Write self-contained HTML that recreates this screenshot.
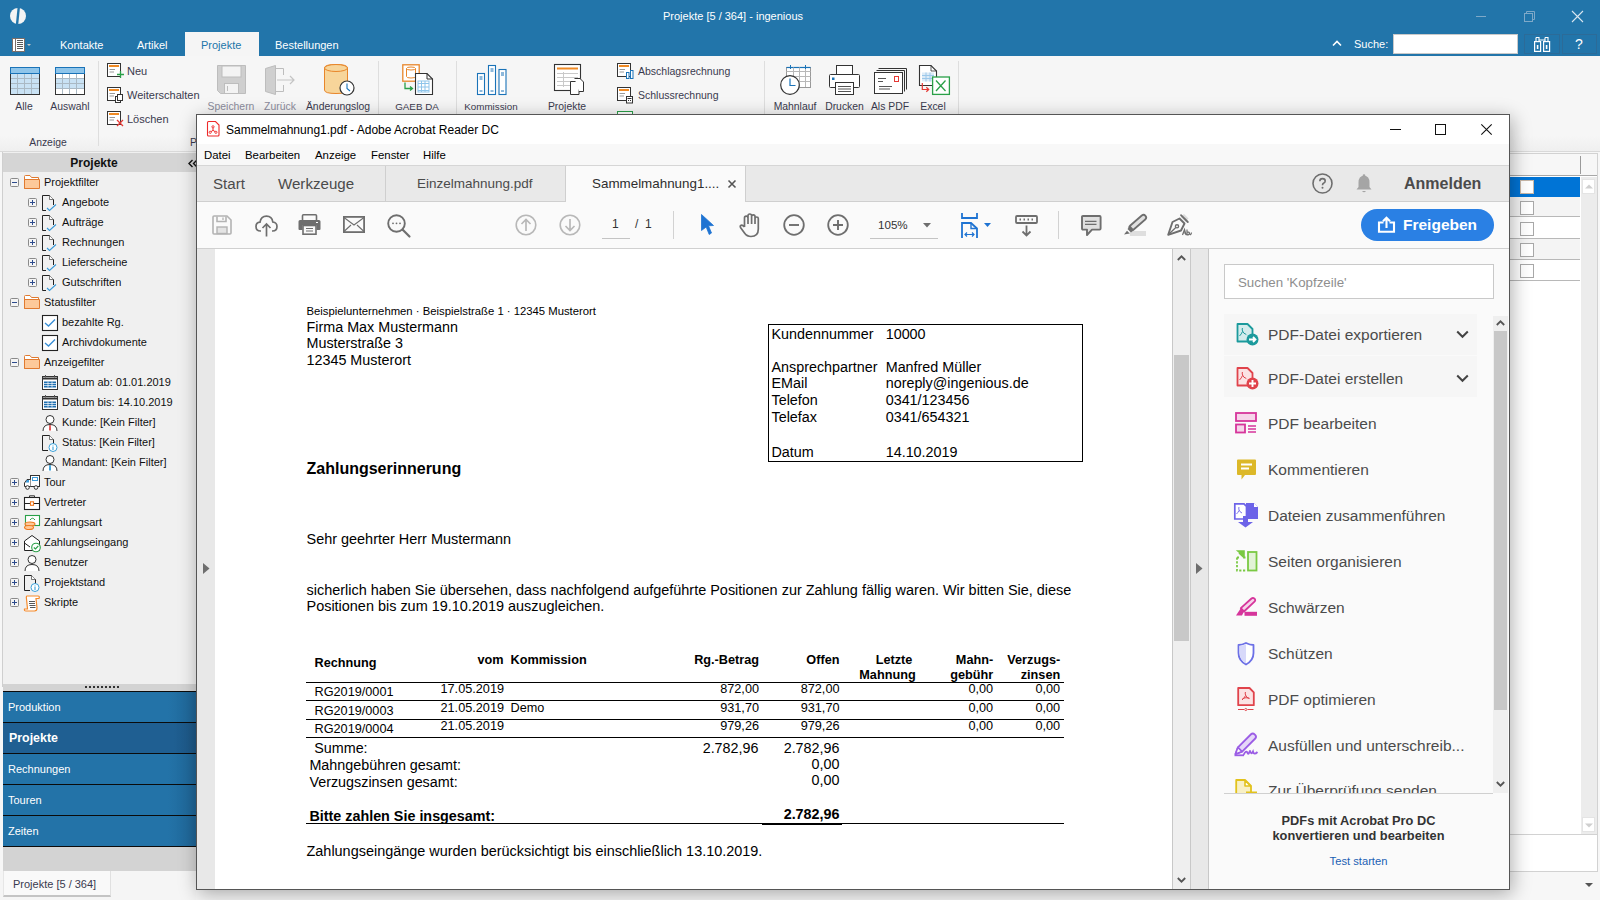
<!DOCTYPE html>
<html><head><meta charset="utf-8">
<style>
*{margin:0;padding:0;box-sizing:border-box}
html,body{width:1600px;height:900px;overflow:hidden;background:#f7f7f7;font-family:"Liberation Sans",sans-serif;font-size:11px;color:#222}
.a{position:absolute}
.t{position:absolute;white-space:nowrap;line-height:12px;height:12px}
svg{position:absolute;overflow:visible}
.rl{position:absolute;white-space:nowrap;line-height:12px;font-size:10.4px;color:#3a3a4e;text-align:center}
.nt{position:absolute;white-space:nowrap;line-height:12px;font-size:11px;color:#111}
.pd{position:absolute;white-space:nowrap;line-height:16px;font-size:14.45px;color:#000}
.tl{position:absolute;white-space:nowrap;line-height:18px;font-size:15.5px;color:#4b4b4b}
</style></head><body>
<!-- ===== BACKGROUND APP ===== -->
<div class="a" style="left:0;top:0;width:1600px;height:56px;background:#2275aa"></div>
<!-- logo -->
<svg style="left:10px;top:8px" width="16" height="16" viewBox="0 0 16 16"><circle cx="8" cy="8" r="8" fill="#f4f4f4"/><path d="M7.6 -1 L10 -1 L8.2 17 L5.8 17 Z" fill="#2275aa"/></svg>
<div class="t" style="left:663px;top:10px;color:#fff;font-size:11px">Projekte [5 / 364] - ingenious</div>
<!-- window controls -->
<div class="a" style="left:1476px;top:16px;width:10px;height:1px;background:#7fa9c8"></div>
<svg style="left:1524px;top:11px" width="11" height="11"><rect x="0.5" y="2.5" width="8" height="8" fill="none" stroke="#7fa9c8"/><path d="M2.5 2.5 V0.5 H10.5 V8.5 H8.5" fill="none" stroke="#7fa9c8"/></svg>
<svg style="left:1572px;top:11px" width="11" height="11"><path d="M0 0 L11 11 M11 0 L0 11" stroke="#d9e6f0" stroke-width="1.1"/></svg>
<!-- menu icon -->
<svg style="left:12px;top:38px" width="22" height="14"><rect x="0.5" y="0.5" width="12" height="13" fill="#fff" stroke="#7b6f6a"/><path d="M3.5 0.5 V13.5" stroke="#7b6f6a"/><path d="M5 2.5 H11 M5 4.5 H11 M5 6.5 H11 M5 8.5 H11 M5 10.5 H11" stroke="#5a5a5a"/><path d="M15 6 L19 6 L17 8 Z" fill="#c8c8c8"/></svg>
<div class="t" style="left:60px;top:39px;color:#fff;font-size:11px">Kontakte</div>
<div class="t" style="left:137px;top:39px;color:#fff;font-size:11px">Artikel</div>
<div class="a" style="left:185px;top:32px;width:74px;height:24px;background:#f5f5f5"></div>
<div class="t" style="left:201px;top:39px;color:#2275aa;font-size:11px">Projekte</div>
<div class="t" style="left:275px;top:39px;color:#fff;font-size:11px">Bestellungen</div>
<svg style="left:1332px;top:40px" width="10" height="7"><path d="M1 5.5 L5 1.5 L9 5.5" fill="none" stroke="#fff" stroke-width="1.6"/></svg>
<div class="t" style="left:1354px;top:38px;color:#fff;font-size:11px">Suche:</div>
<div class="a" style="left:1393px;top:34px;width:125px;height:20px;background:#fff;border:1px solid #c9c9c9"></div>
<div class="a" style="left:1524px;top:34px;width:36px;height:20px;border:1px solid #2c6b98"></div>
<svg style="left:1534px;top:37px" width="17" height="15"><path d="M2 0.5 H5 V4.5 M11 0.5 H14 V4.5" fill="none" stroke="#fff" stroke-width="1.1"/><path d="M2 0.5 V4.5 M11 0.5 V4.5 M5 3 H11" fill="none" stroke="#fff" stroke-width="1.1"/><rect x="0.6" y="4.6" width="6" height="9.8" fill="none" stroke="#fff" stroke-width="1.2"/><rect x="9.6" y="4.6" width="6" height="9.8" fill="none" stroke="#fff" stroke-width="1.2"/><rect x="2.8" y="8" width="1.6" height="4" fill="#fff"/><rect x="11.8" y="8" width="1.6" height="4" fill="#fff"/></svg>
<div class="a" style="left:1562px;top:34px;width:35px;height:20px;border:1px solid #2c6b98"></div>
<div class="t" style="left:1575px;top:37px;color:#fff;font-size:14px;line-height:15px;height:15px">?</div>

<!-- ribbon body -->
<div class="a" style="left:0;top:56px;width:1600px;height:95px;background:linear-gradient(#f6f6f6 0,#f6f6f6 80px,#efefef 95px)"></div>
<div class="a" style="left:0;top:151px;width:1600px;height:1px;background:#d9d9d9"></div>
<!-- separators -->
<div class="a" style="left:98px;top:61px;width:1px;height:85px;background:#dedede"></div>
<div class="a" style="left:378px;top:61px;width:1px;height:85px;background:#dedede"></div>
<div class="a" style="left:456px;top:61px;width:1px;height:85px;background:#dedede"></div>
<div class="a" style="left:764px;top:61px;width:1px;height:85px;background:#dedede"></div>
<div class="a" style="left:958px;top:61px;width:1px;height:85px;background:#dedede"></div>

<!-- Alle -->
<svg style="left:10px;top:67px" width="30" height="28" viewBox="0 0 30 28"><rect x="0.5" y="0.5" width="29" height="27" fill="#c9e2f4" stroke="#333"/><rect x="1" y="1" width="28" height="5" fill="#8fc5ea"/><path d="M0.5 6.5 H29.5" stroke="#1a73b8"/><path d="M1 11.5 H29 M1 16.5 H29 M1 21.5 H29 M7.5 6 V27 M14.5 6 V27 M21.5 6 V27" stroke="#aab9c4"/><rect x="0.5" y="0.5" width="29" height="27" fill="none" stroke="#333"/><rect x="0.5" y="0.5" width="29" height="6" fill="none" stroke="#1a73b8"/></svg>
<div class="rl" style="left:9px;top:101px;width:30px">Alle</div>
<!-- Auswahl -->
<svg style="left:55px;top:67px" width="30" height="28" viewBox="0 0 30 28"><rect x="0.5" y="0.5" width="29" height="27" fill="#fff" stroke="#333"/><rect x="1" y="11" width="28" height="11" fill="#c9e2f4"/><rect x="1" y="1" width="28" height="5" fill="#8fc5ea"/><path d="M1 11.5 H29 M1 16.5 H29 M1 21.5 H29 M7.5 6 V27 M14.5 6 V27 M21.5 6 V27" stroke="#aab9c4"/><rect x="0.5" y="0.5" width="29" height="27" fill="none" stroke="#333"/><rect x="0.5" y="0.5" width="29" height="6" fill="none" stroke="#1a73b8"/></svg>
<div class="rl" style="left:50px;top:101px;width:40px">Auswahl</div>
<div class="rl" style="left:22px;top:137px;width:52px">Anzeige</div>
<div class="rl" style="left:190px;top:137px;width:10px;text-align:left">P</div>

<!-- small buttons Neu / Weiterschalten / Löschen -->
<svg style="left:107px;top:63px" width="18" height="17"><rect x="0.5" y="0.5" width="13" height="13" fill="#fff" stroke="#333"/><rect x="2" y="2" width="10" height="2" fill="#f08a24"/><path d="M2.5 6.5 H8 M2.5 9 H7" stroke="#999"/><path d="M10 11.5 H17 M13.5 8 V15" stroke="#2aa048" stroke-width="1.3"/></svg>
<div class="t" style="left:127px;top:65px;font-size:11px;color:#3a3a4e">Neu</div>
<svg style="left:107px;top:87px" width="18" height="17"><rect x="0.5" y="0.5" width="13" height="13" fill="#fff" stroke="#333"/><rect x="2" y="2" width="10" height="2" fill="#f08a24"/><path d="M2.5 6.5 H8 M2.5 9 H7" stroke="#999"/><rect x="8.5" y="9.5" width="5" height="6" fill="#fff" stroke="#333"/><rect x="10.5" y="7.5" width="5" height="6" fill="#fff" stroke="#333"/></svg>
<div class="t" style="left:127px;top:89px;font-size:11px;color:#3a3a4e">Weiterschalten</div>
<svg style="left:107px;top:111px" width="18" height="17"><rect x="0.5" y="0.5" width="13" height="13" fill="#fff" stroke="#333"/><rect x="2" y="2" width="10" height="2" fill="#f08a24"/><path d="M2.5 6.5 H8 M2.5 9 H7" stroke="#999"/><path d="M10 9 L16 15 M16 9 L10 15" stroke="#e53935" stroke-width="1.3"/></svg>
<div class="t" style="left:127px;top:113px;font-size:11px;color:#3a3a4e">Löschen</div>

<!-- Speichern (disabled) -->
<svg style="left:217px;top:65px" width="29" height="29" viewBox="0 0 29 29"><path d="M0.5 0.5 H28.5 V28.5 H3.5 L0.5 25.5 Z" fill="#cfcfcf" stroke="#bdbdbd"/><rect x="5" y="1" width="19" height="11" fill="#f3f3f3" stroke="#bdbdbd"/><rect x="7.5" y="18.5" width="14" height="10" fill="#f3f3f3" stroke="#bdbdbd"/><path d="M10.5 21 V26" stroke="#bdbdbd"/></svg>
<div class="rl" style="left:205px;top:101px;width:52px;color:#8c8c9c">Speichern</div>
<!-- Zurück -->
<svg style="left:265px;top:65px" width="32" height="30" viewBox="0 0 32 30"><path d="M0.5 3.5 L10.5 0.5 V29.5 L0.5 26.5 Z" fill="#cfcfcf" stroke="#bdbdbd"/><path d="M10.5 3.5 H18.5 V10 M18.5 20 V26.5 H10.5" fill="none" stroke="#bdbdbd"/><path d="M12 15 H29 M25 11 L29 15 L25 19" fill="none" stroke="#c4c4c4" stroke-width="1.2"/></svg>
<div class="rl" style="left:262px;top:101px;width:36px;color:#8c8c9c">Zurück</div>
<!-- Änderungslog -->
<svg style="left:324px;top:64px" width="32" height="32" viewBox="0 0 32 32"><path d="M0.5 4 Q0.5 0.5 12 0.5 Q23.5 0.5 23.5 4 V26 Q23.5 29.5 12 29.5 Q0.5 29.5 0.5 26 Z" fill="#f7d59a" stroke="#e8862a"/><ellipse cx="12" cy="4" rx="11.5" ry="3.5" fill="#f7d59a" stroke="#e8862a"/><circle cx="23" cy="24" r="7" fill="#fff" stroke="#333" stroke-width="1.2"/><path d="M23 19.5 V24.5 L26 27" fill="none" stroke="#1a73b8" stroke-width="1.1"/></svg>
<div class="rl" style="left:303px;top:101px;width:70px">Änderungslog</div>
<!-- GAEB DA -->
<svg style="left:402px;top:64px" width="33" height="32" viewBox="0 0 33 32"><rect x="0.8" y="0.8" width="16.4" height="16.4" fill="#fff" stroke="#e8862a" stroke-width="1.3"/><path d="M4.5 4.5 Q4.5 3 9 3 Q13.5 3 13.5 4.5 V12.5 Q13.5 14 9 14 Q4.5 14 4.5 12.5 Z M4.5 4.5 Q4.5 6 9 6 Q13.5 6 13.5 4.5" fill="none" stroke="#e8862a"/><path d="M13.5 9.5 H25 L30.5 15 V30.5 H13.5 Z" fill="#fff" stroke="#333" stroke-width="1.1"/><path d="M25 9.5 V15 H30.5" fill="none" stroke="#333"/><path d="M16 19.5 H27 M16 23 H27 M16 26.5 H27 M19.5 17 V28 M23 17 V28" stroke="#8fc5ea"/><rect x="16" y="17" width="11" height="11" fill="none" stroke="#8fc5ea"/><path d="M3 18.5 V24.5 H10 M8 22.5 L10.5 24.5 L8 26.5" fill="none" stroke="#2aa048" stroke-width="1.3"/></svg>
<div class="rl" style="left:393px;top:101px;width:48px;font-size:9.8px">GAEB DA</div>
<!-- Kommission -->
<svg style="left:477px;top:65px" width="30" height="30" viewBox="0 0 30 30"><rect x="0.5" y="8.5" width="7" height="21" fill="#fff" stroke="#1a73b8" stroke-width="1.1"/><rect x="11.5" y="0.5" width="7" height="29" fill="#fff" stroke="#1a73b8" stroke-width="1.1"/><rect x="22" y="4.5" width="7" height="25" fill="#fff" stroke="#1a73b8" stroke-width="1.1"/><path d="M2.5 12 H5.5 M2.5 14 H5.5 M2.5 26 H5.5 M13.5 4 H16.5 M13.5 6 H16.5 M13.5 26 H16.5 M24 8 H27 M24 10 H27 M24 26 H27" stroke="#1a73b8"/></svg>
<div class="rl" style="left:462px;top:101px;width:58px;font-size:9.8px">Kommission</div>
<!-- Projekte -->
<svg style="left:554px;top:64px" width="31" height="32" viewBox="0 0 31 32"><rect x="0.5" y="0.5" width="26" height="26" fill="#fff" stroke="#333" stroke-width="1.1"/><rect x="3" y="3.5" width="21" height="2" fill="#f08a24"/><path d="M3 9.5 H24 M3 13.5 H24 M3 17.5 H24 M3 21.5 H17 M9.5 8 V23" stroke="#c9c9c9"/><path d="M16.5 17.5 H22 L25 20.5 V30.5 H16.5 Z" fill="#fff" stroke="#333"/><path d="M20.5 14.5 H26 L29.5 18 V27.5 H25" fill="#fff" stroke="#333"/></svg>
<div class="rl" style="left:545px;top:101px;width:44px">Projekte</div>
<!-- Abschlagsrechnung / Schlussrechnung -->
<svg style="left:617px;top:63px" width="18" height="17"><rect x="0.5" y="0.5" width="13" height="13" fill="#fff" stroke="#333"/><rect x="2" y="2" width="10" height="2" fill="#f08a24"/><path d="M2.5 6.5 H8 M2.5 9 H7" stroke="#999"/><rect x="9.5" y="9.5" width="2.5" height="6" fill="#fff" stroke="#1a73b8"/><rect x="13.5" y="7.5" width="2.5" height="8" fill="#fff" stroke="#1a73b8"/></svg>
<div class="t" style="left:638px;top:65px;font-size:10.5px;color:#3a3a4e">Abschlagsrechnung</div>
<svg style="left:617px;top:87px" width="18" height="17"><rect x="0.5" y="0.5" width="13" height="13" fill="#fff" stroke="#333"/><rect x="2" y="2" width="10" height="2" fill="#f08a24"/><path d="M2.5 6.5 H8 M2.5 9 H7" stroke="#999"/><rect x="9.5" y="9.5" width="6" height="6.5" fill="#fff" stroke="#333"/><path d="M10.5 11.5 H14.5 M11 13.5 h1 M13 13.5 h1" stroke="#333"/></svg>
<div class="t" style="left:638px;top:89px;font-size:10.5px;color:#3a3a4e">Schlussrechnung</div>
<svg style="left:617px;top:111px" width="18" height="5"><rect x="0.5" y="0.5" width="15" height="6" fill="#fff" stroke="#2aa048"/></svg>
<!-- Mahnlauf -->
<svg style="left:780px;top:65px" width="31" height="30" viewBox="0 0 31 30"><rect x="6.5" y="2.5" width="24" height="20" fill="#fff" stroke="#999"/><path d="M6.5 2.5 H30.5" stroke="#1a73b8" stroke-width="1.2"/><path d="M6.5 6.5 H30.5 M6.5 11.5 H30.5 M6.5 16.5 H30.5 M13.5 2.5 V22 M19.5 2.5 V22 M25.5 2.5 V22" stroke="#b8b8b8"/><path d="M10.5 0 V4 M25.5 0 V4" stroke="#1a73b8"/><circle cx="10" cy="20" r="9.3" fill="#fff" stroke="#333" stroke-width="1.2"/><path d="M10 13.5 V20.5 H15.5" fill="none" stroke="#1a73b8" stroke-width="1.2"/></svg>
<div class="rl" style="left:770px;top:101px;width:50px">Mahnlauf</div>
<!-- Drucken -->
<svg style="left:829px;top:65px" width="31" height="30" viewBox="0 0 31 30"><rect x="7.5" y="0.5" width="16" height="9" fill="#fff" stroke="#333"/><rect x="0.5" y="9.5" width="30" height="13" rx="1" fill="#fff" stroke="#333"/><rect x="3" y="12.5" width="2.5" height="2.5" fill="#1a73b8"/><rect x="6.5" y="17.5" width="18" height="12" fill="#fff" stroke="#333"/><path d="M9 21.5 H22 M9 24 H22 M9 26.5 H22" stroke="#555"/></svg>
<div class="rl" style="left:822px;top:101px;width:45px">Drucken</div>
<!-- Als PDF -->
<svg style="left:874px;top:68px" width="33" height="26" viewBox="0 0 33 26"><path d="M4.5 0.5 H32.5 V21.5 M2.5 2.5 H30.5 V23.5" fill="none" stroke="#333"/><rect x="0.5" y="4.5" width="28" height="21" fill="#fff" stroke="#333"/><rect x="20.5" y="8.5" width="4" height="5" fill="#fff" stroke="#e53935"/><path d="M4 10.5 H12 M4 13.5 H9 M5 18.5 H18 M5 21 H16" stroke="#555"/></svg>
<div class="rl" style="left:868px;top:101px;width:44px">Als PDF</div>
<!-- Excel -->
<svg style="left:919px;top:65px" width="31" height="30" viewBox="0 0 31 30"><path d="M0.5 0.5 H12 L17.5 6 V20.5 H0.5 Z" fill="#fff" stroke="#333" stroke-width="1.1"/><path d="M12 0.5 V6 H17.5" fill="none" stroke="#333" stroke-width="0.8"/><rect x="3" y="7.5" width="12" height="9" fill="#dcebf7"/><path d="M3 10.5 H15 M3 13.5 H15 M7 7.5 V16.5 M11 7.5 V16.5" stroke="#9cc8ea" stroke-width="1"/><path d="M3.3 18 V24.5 H9.5 M7.3 22.3 L9.7 24.5 L7.3 26.7" fill="none" stroke="#e53935" stroke-width="1.2"/><rect x="13.6" y="12" width="16.8" height="17.4" fill="#fff" stroke="#2aa048" stroke-width="1.3"/><path d="M17 15.5 L26.5 26 M26.5 15.5 L17 26" stroke="#2aa048" stroke-width="1.3"/></svg>
<div class="rl" style="left:914px;top:101px;width:38px">Excel</div>

<!-- left nav panel -->
<div class="a" style="left:2px;top:152px;width:195px;height:535px;background:#f0f0f0;border-left:1px solid #cfcfcf"></div>
<div class="a" style="left:3px;top:153px;width:194px;height:19px;background:#d5d5d5"></div>
<div class="t" style="left:58px;top:157px;font-size:12px;line-height:13px;height:13px;font-weight:bold;color:#111;width:72px;text-align:center">Projekte</div>
<svg style="left:188px;top:159px" width="10" height="9"><path d="M4.5 1 L1 4.5 L4.5 8 M9 1 L5.5 4.5 L9 8" fill="none" stroke="#111" stroke-width="1.4"/></svg>
<svg style="left:10px;top:178px" width="9" height="9"><rect x="0.5" y="0.5" width="8" height="8" rx="1" fill="#f4f4f4" stroke="#8a8a8a"/><path d="M2 4.5 H7" stroke="#2c4a8c" stroke-width="1"/></svg>
<svg style="left:24px;top:175px" width="16" height="16"><path d="M0.5 1.5 Q0.5 0.5 1.5 0.5 H6 L7.5 2.5 H14.5 V13.5 H0.5 Z" fill="#fff" stroke="#e07a30"/><path d="M0.5 4.5 H15.5 V13.5 H0.5 Z" fill="#fdc99a" stroke="#e07a30"/></svg>
<div class="nt" style="left:44px;top:176px">Projektfilter</div>
<svg style="left:28px;top:198px" width="9" height="9"><rect x="0.5" y="0.5" width="8" height="8" rx="1" fill="#f4f4f4" stroke="#8a8a8a"/><path d="M2 4.5 H7 M4.5 2 V7" stroke="#2c4a8c" stroke-width="1"/></svg>
<svg style="left:42px;top:195px" width="16" height="16"><path d="M0.5 15.5 V0.5 H7.5 L11.5 4.5 V10 M0.5 15.5 H4" fill="none" stroke="#222"/><path d="M7.5 0.5 V4.5 H11.5" fill="#fff" stroke="#222" stroke-width="0.6"/><path d="M5 13 L7.5 15.5 L14 9.5" fill="none" stroke="#3a9ad9" stroke-width="1.1"/></svg>
<div class="nt" style="left:62px;top:196px">Angebote</div>
<svg style="left:28px;top:218px" width="9" height="9"><rect x="0.5" y="0.5" width="8" height="8" rx="1" fill="#f4f4f4" stroke="#8a8a8a"/><path d="M2 4.5 H7 M4.5 2 V7" stroke="#2c4a8c" stroke-width="1"/></svg>
<svg style="left:42px;top:215px" width="16" height="16"><path d="M0.5 15.5 V0.5 H7.5 L11.5 4.5 V10 M0.5 15.5 H4" fill="none" stroke="#222"/><path d="M7.5 0.5 V4.5 H11.5" fill="#fff" stroke="#222" stroke-width="0.6"/><path d="M5 13 L7.5 15.5 L14 9.5" fill="none" stroke="#3a9ad9" stroke-width="1.1"/></svg>
<div class="nt" style="left:62px;top:216px">Aufträge</div>
<svg style="left:28px;top:238px" width="9" height="9"><rect x="0.5" y="0.5" width="8" height="8" rx="1" fill="#f4f4f4" stroke="#8a8a8a"/><path d="M2 4.5 H7 M4.5 2 V7" stroke="#2c4a8c" stroke-width="1"/></svg>
<svg style="left:42px;top:235px" width="16" height="16"><path d="M0.5 15.5 V0.5 H7.5 L11.5 4.5 V10 M0.5 15.5 H4" fill="none" stroke="#222"/><path d="M7.5 0.5 V4.5 H11.5" fill="#fff" stroke="#222" stroke-width="0.6"/><path d="M5 13 L7.5 15.5 L14 9.5" fill="none" stroke="#3a9ad9" stroke-width="1.1"/></svg>
<div class="nt" style="left:62px;top:236px">Rechnungen</div>
<svg style="left:28px;top:258px" width="9" height="9"><rect x="0.5" y="0.5" width="8" height="8" rx="1" fill="#f4f4f4" stroke="#8a8a8a"/><path d="M2 4.5 H7 M4.5 2 V7" stroke="#2c4a8c" stroke-width="1"/></svg>
<svg style="left:42px;top:255px" width="16" height="16"><path d="M0.5 15.5 V0.5 H7.5 L11.5 4.5 V10 M0.5 15.5 H4" fill="none" stroke="#222"/><path d="M7.5 0.5 V4.5 H11.5" fill="#fff" stroke="#222" stroke-width="0.6"/><path d="M5 13 L7.5 15.5 L14 9.5" fill="none" stroke="#3a9ad9" stroke-width="1.1"/></svg>
<div class="nt" style="left:62px;top:256px">Lieferscheine</div>
<svg style="left:28px;top:278px" width="9" height="9"><rect x="0.5" y="0.5" width="8" height="8" rx="1" fill="#f4f4f4" stroke="#8a8a8a"/><path d="M2 4.5 H7 M4.5 2 V7" stroke="#2c4a8c" stroke-width="1"/></svg>
<svg style="left:42px;top:275px" width="16" height="16"><path d="M0.5 15.5 V0.5 H7.5 L11.5 4.5 V10 M0.5 15.5 H4" fill="none" stroke="#222"/><path d="M7.5 0.5 V4.5 H11.5" fill="#fff" stroke="#222" stroke-width="0.6"/><path d="M5 13 L7.5 15.5 L14 9.5" fill="none" stroke="#3a9ad9" stroke-width="1.1"/></svg>
<div class="nt" style="left:62px;top:276px">Gutschriften</div>
<svg style="left:10px;top:298px" width="9" height="9"><rect x="0.5" y="0.5" width="8" height="8" rx="1" fill="#f4f4f4" stroke="#8a8a8a"/><path d="M2 4.5 H7" stroke="#2c4a8c" stroke-width="1"/></svg>
<svg style="left:24px;top:295px" width="16" height="16"><path d="M0.5 1.5 Q0.5 0.5 1.5 0.5 H6 L7.5 2.5 H14.5 V13.5 H0.5 Z" fill="#fff" stroke="#e07a30"/><path d="M0.5 4.5 H15.5 V13.5 H0.5 Z" fill="#fdc99a" stroke="#e07a30"/></svg>
<div class="nt" style="left:44px;top:296px">Statusfilter</div>
<svg style="left:42px;top:315px" width="16" height="16"><rect x="0.5" y="0.5" width="15" height="15" fill="#fff" stroke="#222" stroke-width="1.1"/><path d="M3 8 L6.5 11 L13 4.5" fill="none" stroke="#3a8fd6" stroke-width="1.4"/></svg>
<div class="nt" style="left:62px;top:316px">bezahlte Rg.</div>
<svg style="left:42px;top:335px" width="16" height="16"><rect x="0.5" y="0.5" width="15" height="15" fill="#fff" stroke="#222" stroke-width="1.1"/><path d="M3 8 L6.5 11 L13 4.5" fill="none" stroke="#3a8fd6" stroke-width="1.4"/></svg>
<div class="nt" style="left:62px;top:336px">Archivdokumente</div>
<svg style="left:10px;top:358px" width="9" height="9"><rect x="0.5" y="0.5" width="8" height="8" rx="1" fill="#f4f4f4" stroke="#8a8a8a"/><path d="M2 4.5 H7" stroke="#2c4a8c" stroke-width="1"/></svg>
<svg style="left:24px;top:355px" width="16" height="16"><path d="M0.5 1.5 Q0.5 0.5 1.5 0.5 H6 L7.5 2.5 H14.5 V13.5 H0.5 Z" fill="#fff" stroke="#e07a30"/><path d="M0.5 4.5 H15.5 V13.5 H0.5 Z" fill="#fdc99a" stroke="#e07a30"/></svg>
<div class="nt" style="left:44px;top:356px">Anzeigefilter</div>
<svg style="left:42px;top:375px" width="16" height="16"><rect x="0.5" y="1.5" width="15" height="13" fill="#fff" stroke="#333"/><path d="M0.5 3.5 H15.5" stroke="#333" stroke-width="2"/><path d="M3.5 0 V2.5 M12.5 0 V2.5" stroke="#555"/><rect x="2" y="6.5" width="12" height="6" fill="#1e6fb0"/><path d="M2 8.5 H14 M2 10.5 H14 M6 6.5 V12.5 M10 6.5 V12.5" stroke="#fff" stroke-width="0.7"/></svg>
<div class="nt" style="left:62px;top:376px">Datum ab: 01.01.2019</div>
<svg style="left:42px;top:395px" width="16" height="16"><rect x="0.5" y="1.5" width="15" height="13" fill="#fff" stroke="#333"/><path d="M0.5 3.5 H15.5" stroke="#333" stroke-width="2"/><path d="M3.5 0 V2.5 M12.5 0 V2.5" stroke="#555"/><rect x="2" y="6.5" width="12" height="6" fill="#1e6fb0"/><path d="M2 8.5 H14 M2 10.5 H14 M6 6.5 V12.5 M10 6.5 V12.5" stroke="#fff" stroke-width="0.7"/></svg>
<div class="nt" style="left:62px;top:396px">Datum bis: 14.10.2019</div>
<svg style="left:42px;top:415px" width="16" height="16"><circle cx="8" cy="4.5" r="4" fill="#fff" stroke="#333"/><path d="M1 16 Q1 9.5 8 9.5 Q15 9.5 15 16" fill="#fff" stroke="#333"/><path d="M7.2 10 H8.8 L9 15 L8 16 L7 15 Z" fill="#e05050"/></svg>
<div class="nt" style="left:62px;top:416px">Kunde: [Kein Filter]</div>
<svg style="left:42px;top:435px" width="16" height="16"><path d="M0.5 15.5 V0.5 H7.5 L11.5 4.5 V9 M0.5 15.5 H6" fill="none" stroke="#222"/><path d="M7.5 0.5 V4.5 H11.5" fill="#fff" stroke="#222" stroke-width="0.6"/><circle cx="11" cy="12.5" r="4" fill="#fff" stroke="#3aa0d8"/><path d="M11 11.5 V15 M11 10 V10.6" stroke="#3aa0d8" stroke-width="1.1"/></svg>
<div class="nt" style="left:62px;top:436px">Status: [Kein Filter]</div>
<svg style="left:42px;top:455px" width="16" height="16"><circle cx="8" cy="4.5" r="4" fill="#fff" stroke="#333"/><path d="M1 16 Q1 9.5 8 9.5 Q15 9.5 15 16" fill="#fff" stroke="#333"/><path d="M7.2 10 H8.8 L9 15 L8 16 L7 15 Z" fill="#3aa0d8"/></svg>
<div class="nt" style="left:62px;top:456px">Mandant: [Kein Filter]</div>
<svg style="left:10px;top:478px" width="9" height="9"><rect x="0.5" y="0.5" width="8" height="8" rx="1" fill="#f4f4f4" stroke="#8a8a8a"/><path d="M2 4.5 H7 M4.5 2 V7" stroke="#2c4a8c" stroke-width="1"/></svg>
<svg style="left:24px;top:475px" width="16" height="16"><rect x="6.5" y="0.5" width="9" height="11" fill="#fff" stroke="#333"/><rect x="8.5" y="2.5" width="5" height="3" fill="#fff" stroke="#3a9ad9"/><path d="M6.5 4.5 H3 L0.5 8 V11.5 H6.5" fill="#fff" stroke="#333"/><path d="M1.5 7.5 L3 5 H5 V7.5Z" fill="#3a9ad9"/><circle cx="3.5" cy="12.5" r="1.8" fill="#fff" stroke="#333"/><circle cx="12" cy="12.5" r="1.8" fill="#fff" stroke="#333"/></svg>
<div class="nt" style="left:44px;top:476px">Tour</div>
<svg style="left:10px;top:498px" width="9" height="9"><rect x="0.5" y="0.5" width="8" height="8" rx="1" fill="#f4f4f4" stroke="#8a8a8a"/><path d="M2 4.5 H7 M4.5 2 V7" stroke="#2c4a8c" stroke-width="1"/></svg>
<svg style="left:24px;top:495px" width="16" height="16"><rect x="0.5" y="2.5" width="15" height="12" fill="#fff" stroke="#222" stroke-width="1.1"/><path d="M5.5 2.5 V0.8 H10.5 V2.5" fill="none" stroke="#333"/><path d="M0.5 8.5 H15.5" stroke="#222"/><rect x="6.5" y="6.8" width="3" height="3.5" fill="#fff" stroke="#f07a20" stroke-width="1.1"/></svg>
<div class="nt" style="left:44px;top:496px">Vertreter</div>
<svg style="left:10px;top:518px" width="9" height="9"><rect x="0.5" y="0.5" width="8" height="8" rx="1" fill="#f4f4f4" stroke="#8a8a8a"/><path d="M2 4.5 H7 M4.5 2 V7" stroke="#2c4a8c" stroke-width="1"/></svg>
<svg style="left:24px;top:515px" width="16" height="16"><rect x="1.5" y="0.5" width="14" height="10" fill="#fff" stroke="#2aa048" stroke-width="1.1"/><path d="M6 5 Q8.5 1.5 11 5" fill="none" stroke="#2aa048"/><ellipse cx="6" cy="9" rx="5" ry="2" fill="#fdc99a" stroke="#f07a20" stroke-width="1.1"/><ellipse cx="5" cy="12.5" rx="4.5" ry="2" fill="#fdc99a" stroke="#f07a20" stroke-width="1.1"/></svg>
<div class="nt" style="left:44px;top:516px">Zahlungsart</div>
<svg style="left:10px;top:538px" width="9" height="9"><rect x="0.5" y="0.5" width="8" height="8" rx="1" fill="#f4f4f4" stroke="#8a8a8a"/><path d="M2 4.5 H7 M4.5 2 V7" stroke="#2c4a8c" stroke-width="1"/></svg>
<svg style="left:24px;top:535px" width="16" height="16"><path d="M0.5 6 L8 0.5 L15.5 6 V15.5 H0.5 Z" fill="#fff" stroke="#222"/><path d="M0.5 8 L6 12" stroke="#222"/><circle cx="12" cy="12.5" r="4.3" fill="#fff" stroke="#2aa048" stroke-width="1.1"/><path d="M9.8 12.5 L11.5 14 L14.3 10.8" fill="none" stroke="#2aa048" stroke-width="1.2"/></svg>
<div class="nt" style="left:44px;top:536px">Zahlungseingang</div>
<svg style="left:10px;top:558px" width="9" height="9"><rect x="0.5" y="0.5" width="8" height="8" rx="1" fill="#f4f4f4" stroke="#8a8a8a"/><path d="M2 4.5 H7 M4.5 2 V7" stroke="#2c4a8c" stroke-width="1"/></svg>
<svg style="left:24px;top:555px" width="16" height="16"><circle cx="8" cy="4.5" r="4" fill="#fff" stroke="#333"/><path d="M1 16 Q1 9.5 8 9.5 Q15 9.5 15 16" fill="#fff" stroke="#333"/></svg>
<div class="nt" style="left:44px;top:556px">Benutzer</div>
<svg style="left:10px;top:578px" width="9" height="9"><rect x="0.5" y="0.5" width="8" height="8" rx="1" fill="#f4f4f4" stroke="#8a8a8a"/><path d="M2 4.5 H7 M4.5 2 V7" stroke="#2c4a8c" stroke-width="1"/></svg>
<svg style="left:24px;top:575px" width="16" height="16"><path d="M0.5 15.5 V0.5 H7.5 L11.5 4.5 V9 M0.5 15.5 H6" fill="none" stroke="#222"/><path d="M7.5 0.5 V4.5 H11.5" fill="#fff" stroke="#222" stroke-width="0.6"/><circle cx="11" cy="12.5" r="4" fill="#fff" stroke="#3aa0d8"/><path d="M11 11.5 V15 M11 10 V10.6" stroke="#3aa0d8" stroke-width="1.1"/></svg>
<div class="nt" style="left:44px;top:576px">Projektstand</div>
<svg style="left:10px;top:598px" width="9" height="9"><rect x="0.5" y="0.5" width="8" height="8" rx="1" fill="#f4f4f4" stroke="#8a8a8a"/><path d="M2 4.5 H7 M4.5 2 V7" stroke="#2c4a8c" stroke-width="1"/></svg>
<svg style="left:24px;top:595px" width="16" height="16"><path d="M3 1 H14 Q16 1 15 3.5 H12 L13 13 Q13 16 10.5 16 H2 Q0 16 0.5 14 H3.5 L2.5 4 Q2 1 3 1Z" fill="#fff" stroke="#f58a2a" stroke-width="1.2"/><path d="M5 6.5 H11 M5 8.5 H11 M5.5 10.5 H11.5 M6 12.5 H11.5" stroke="#444" stroke-width="0.9"/></svg>
<div class="nt" style="left:44px;top:596px">Skripte</div>
<div class="a" style="left:3px;top:684px;width:194px;height:7px;background:#d3d3d3"></div>
<svg style="left:85px;top:686px" width="36" height="3"><rect x="0" y="0" width="2" height="2" fill="#333"/><rect x="4" y="0" width="2" height="2" fill="#333"/><rect x="8" y="0" width="2" height="2" fill="#333"/><rect x="12" y="0" width="2" height="2" fill="#333"/><rect x="16" y="0" width="2" height="2" fill="#333"/><rect x="20" y="0" width="2" height="2" fill="#333"/><rect x="24" y="0" width="2" height="2" fill="#333"/><rect x="28" y="0" width="2" height="2" fill="#333"/><rect x="32" y="0" width="2" height="2" fill="#333"/></svg>
<div class="a" style="left:3px;top:691px;width:194px;height:32px;background:linear-gradient(90deg,#2373a8 0,#2373a8 165px,#1f6596 194px);border-top:1px solid #0b0b0b"></div>
<div class="t" style="left:8px;top:701px;color:#fff;font-size:11px">Produktion</div>
<div class="a" style="left:3px;top:722px;width:194px;height:32px;background:linear-gradient(90deg,#1f5f92 0,#1f5f92 170px,#1d5785 194px);border-top:1px solid #0b0b0b"></div>
<div class="t" style="left:9px;top:732px;color:#fff;font-weight:bold;font-size:12.4px">Projekte</div>
<div class="a" style="left:3px;top:753px;width:194px;height:32px;background:linear-gradient(90deg,#2373a8 0,#2373a8 165px,#1f6596 194px);border-top:1px solid #0b0b0b"></div>
<div class="t" style="left:8px;top:763px;color:#fff;font-size:11px">Rechnungen</div>
<div class="a" style="left:3px;top:784px;width:194px;height:32px;background:linear-gradient(90deg,#2373a8 0,#2373a8 165px,#1f6596 194px);border-top:1px solid #0b0b0b"></div>
<div class="t" style="left:8px;top:794px;color:#fff;font-size:11px">Touren</div>
<div class="a" style="left:3px;top:815px;width:194px;height:32px;background:linear-gradient(90deg,#2373a8 0,#2373a8 165px,#1f6596 194px);border-top:1px solid #0b0b0b"></div>
<div class="t" style="left:8px;top:825px;color:#fff;font-size:11px">Zeiten</div>
<div class="a" style="left:3px;top:846px;width:194px;height:1px;background:#0b0b0b"></div>
<div class="a" style="left:3px;top:847px;width:194px;height:24px;background:#d3d3d3"></div>
<div class="a" style="left:0;top:871px;width:196px;height:29px;background:#f5f5f5"></div>
<div class="a" style="left:3px;top:871px;width:108px;height:26px;background:#f9f9f9;border-left:1px solid #e6e6e6;border-right:1px solid #e0e0e0;border-bottom:2px solid #c4c4c4"></div>
<div class="t" style="left:13px;top:878px;font-size:11px;color:#3a3a4e">Projekte [5 / 364]</div>
<!-- right grid -->
<div class="a" style="left:1500px;top:153px;width:98px;height:682px;background:#fff;border:1px solid #d2d2d2"></div>
<div class="a" style="left:1501px;top:154px;width:96px;height:22px;background:#f7f7f7;border-bottom:1px solid #a8a8a8"></div>
<div class="a" style="left:1580px;top:156px;width:1px;height:18px;background:#9a9a9a"></div>
<div class="a" style="left:1501px;top:177px;width:79px;height:20px;background:#0074d6"></div>
<div class="a" style="left:1501px;top:197px;width:79px;height:20px;background:#f4f4f4;border-bottom:1px solid #b8b8b8"></div>
<div class="a" style="left:1501px;top:218px;width:79px;height:21px;background:#fff;border-bottom:1px solid #b8b8b8"></div>
<div class="a" style="left:1501px;top:239px;width:79px;height:21px;background:#f4f4f4;border-bottom:1px solid #b8b8b8"></div>
<div class="a" style="left:1501px;top:260px;width:79px;height:21px;background:#fff;border-bottom:1px solid #b8b8b8"></div>
<div class="a" style="left:1520px;top:180px;width:14px;height:14px;background:#fff;border:1px solid #c8b8a8"></div>
<div class="a" style="left:1520px;top:201px;width:14px;height:14px;background:#fff;border:1px solid #a8a8a8"></div>
<div class="a" style="left:1520px;top:222px;width:14px;height:14px;background:#fff;border:1px solid #a8a8a8"></div>
<div class="a" style="left:1520px;top:243px;width:14px;height:14px;background:#fff;border:1px solid #a8a8a8"></div>
<div class="a" style="left:1520px;top:264px;width:14px;height:14px;background:#fff;border:1px solid #a8a8a8"></div>
<div class="a" style="left:1581px;top:177px;width:16px;height:657px;background:#ececec"></div>
<div class="a" style="left:1582px;top:179px;width:13px;height:15px;background:#fff;border:1px solid #e4e4e4"></div>
<svg style="left:1585px;top:184px" width="8" height="5"><path d="M0 4.5 L4 0.5 L8 4.5Z" fill="#cfcfcf"/></svg>
<div class="a" style="left:1582px;top:817px;width:13px;height:15px;background:#fff;border:1px solid #e4e4e4"></div>
<svg style="left:1585px;top:823px" width="8" height="5"><path d="M0 0.5 L4 4.5 L8 0.5Z" fill="#cfcfcf"/></svg>
<div class="a" style="left:1500px;top:834px;width:98px;height:38px;background:#fff;border:1px solid #d2d2d2"></div>
<svg style="left:1585px;top:883px" width="8" height="5"><path d="M0 0 L4 4 L8 0Z" fill="#555"/></svg>
<!-- ===== ACROBAT WINDOW ===== -->
<div class="a" style="left:196px;top:114px;width:1314px;height:776px;background:#fff;border:1px solid #555;box-shadow:2px 4px 18px rgba(0,0,0,.32)"></div>
<!-- title bar -->
<svg style="left:207px;top:121px" width="13" height="16" viewBox="0 0 13 16"><path d="M1.5 0.5 H8.5 L12 4 V14 Q12 15 11 15 H1.5 Q0.5 15 0.5 14 V1.5 Q0.5 0.5 1.5 0.5Z" fill="#fff" stroke="#ee2a2a" stroke-width="1.1"/><path d="M6 9.3 V6.5 M6 9.3 L3.6 11 M6 9.3 L8.6 11" stroke="#ee2a2a" stroke-width="1"/><circle cx="6" cy="5.8" r="1.1" fill="#fff" stroke="#ee2a2a" stroke-width="0.9"/><circle cx="3.2" cy="11.3" r="1.1" fill="#fff" stroke="#ee2a2a" stroke-width="0.9"/><circle cx="8.9" cy="11.3" r="1.1" fill="#fff" stroke="#ee2a2a" stroke-width="0.9"/></svg>
<div class="t" style="left:226px;top:124px;font-size:12px;line-height:13px;height:13px;color:#000">Sammelmahnung1.pdf - Adobe Acrobat Reader DC</div>
<div class="a" style="left:1390px;top:129px;width:11px;height:1px;background:#111"></div>
<div class="a" style="left:1435px;top:124px;width:11px;height:11px;border:1px solid #111"></div>
<svg style="left:1481px;top:124px" width="11" height="11"><path d="M0.3 0.3 L10.7 10.7 M10.7 0.3 L0.3 10.7" stroke="#111" stroke-width="1.1"/></svg>
<!-- menu bar -->
<div class="a" style="left:197px;top:144px;width:1312px;height:22px;background:#f8f8f8;border-bottom:1px solid #d6d6d6"></div>
<div class="t" style="left:204px;top:149px;font-size:11.4px;color:#000">Datei</div>
<div class="t" style="left:245px;top:149px;font-size:11.4px;color:#000">Bearbeiten</div>
<div class="t" style="left:315px;top:149px;font-size:11.4px;color:#000">Anzeige</div>
<div class="t" style="left:371px;top:149px;font-size:11.4px;color:#000">Fenster</div>
<div class="t" style="left:423px;top:149px;font-size:11.4px;color:#000">Hilfe</div>
<!-- tab bar -->
<div class="a" style="left:197px;top:166px;width:1312px;height:36px;background:#e9e9e9;border-bottom:1px solid #cfcfcf"></div>
<div class="t" style="left:213px;top:175px;font-size:15.1px;line-height:17px;height:17px;color:#4b4b4b">Start</div>
<div class="t" style="left:278px;top:175px;font-size:15.1px;line-height:17px;height:17px;color:#4b4b4b">Werkzeuge</div>
<div class="a" style="left:385px;top:166px;width:1px;height:35px;background:#cfcfcf"></div>
<div class="t" style="left:417px;top:176px;font-size:13.5px;line-height:16px;height:16px;color:#4b4b4b">Einzelmahnung.pdf</div>
<div class="a" style="left:565px;top:166px;width:181px;height:36px;background:#fafafa;border-left:1px solid #cfcfcf;border-right:1px solid #cfcfcf"></div>
<div class="t" style="left:592px;top:176px;font-size:13.4px;line-height:16px;height:16px;color:#2e2e2e">Sammelmahnung1....</div>
<svg style="left:728px;top:180px" width="8" height="8"><path d="M0.5 0.5 L7.5 7.5 M7.5 0.5 L0.5 7.5" stroke="#555" stroke-width="1.6"/></svg>
<!-- help / bell / anmelden -->
<svg style="left:1312px;top:173px" width="21" height="21"><circle cx="10.5" cy="10.5" r="9.5" fill="none" stroke="#6e6e6e" stroke-width="1.6"/><path d="M7.8 8.2 Q7.8 5.6 10.5 5.6 Q13.2 5.6 13.2 8 Q13.2 9.5 11.5 10.3 Q10.5 10.8 10.5 12.3" fill="none" stroke="#6e6e6e" stroke-width="1.6"/><circle cx="10.5" cy="14.8" r="1" fill="#6e6e6e"/></svg>
<svg style="left:1355px;top:174px" width="18" height="20"><path d="M9 1.5 Q14.5 2 14.5 8.5 V13 L16.5 15.5 H1.5 L3.5 13 V8.5 Q3.5 2 9 1.5Z" fill="#a5a5a5"/><circle cx="9" cy="1.5" r="1.3" fill="#a5a5a5"/><path d="M7 17 Q9 19.5 11 17Z" fill="#a5a5a5"/></svg>
<div class="t" style="left:1404px;top:175px;font-size:16px;line-height:18px;height:18px;font-weight:bold;color:#4b4b4b">Anmelden</div>
<!-- toolbar -->
<div class="a" style="left:197px;top:202px;width:1312px;height:47px;background:#fafafa;border-bottom:1px solid #d0d0d0"></div>
<!-- save -->
<svg style="left:212px;top:215px" width="20" height="20"><path d="M1 2 Q1 1 2 1 H15 L19 5 V18 Q19 19 18 19 H2 Q1 19 1 18Z" fill="none" stroke="#b3b3b3" stroke-width="1.6"/><path d="M5 1.5 V6.5 H14 V1.5" fill="none" stroke="#b3b3b3" stroke-width="1.6"/><path d="M11 2.5 V5" stroke="#b3b3b3" stroke-width="1.3"/><rect x="5" y="12" width="10" height="6.5" fill="#e4e4e4" stroke="#b3b3b3" stroke-width="1.4"/></svg>
<!-- upload -->
<svg style="left:255px;top:215px" width="23" height="22"><path d="M6 16 H5.5 Q1 16 1 11.5 Q1 7.5 5 7.2 Q6 1.2 11.5 1.2 Q17 1.2 17.8 7 Q22 7.5 22 11.5 Q22 16 17.5 16 H17" fill="none" stroke="#6e6e6e" stroke-width="1.7"/><path d="M11.5 21.5 V9 M7.5 13 L11.5 9 L15.5 13" fill="none" stroke="#6e6e6e" stroke-width="1.7"/></svg>
<!-- print -->
<svg style="left:298px;top:214px" width="23" height="21"><rect x="4.5" y="0.8" width="14" height="6" rx="1" fill="none" stroke="#6e6e6e" stroke-width="1.6"/><path d="M2 6 H21 Q22.5 6 22.5 7.5 V15 Q22.5 16 21.5 16 H18.5 V11 H4.5 V16 H1.5 Q0.5 16 0.5 15 V7.5 Q0.5 6 2 6Z" fill="#6e6e6e"/><rect x="5" y="11.5" width="13" height="8.7" fill="none" stroke="#6e6e6e" stroke-width="1.6"/><path d="M8 14.5 H15 M8 17 H15" stroke="#6e6e6e" stroke-width="1.1"/><rect x="18" y="8" width="2" height="1" fill="#fff"/></svg>
<!-- mail -->
<svg style="left:343px;top:216px" width="22" height="17"><rect x="0.9" y="0.9" width="20.2" height="15.2" fill="none" stroke="#6e6e6e" stroke-width="1.8"/><path d="M1 1.5 L11 9 L21 1.5 M1 15.5 L8 9 M21 15.5 L14 9" fill="none" stroke="#6e6e6e" stroke-width="1.1"/></svg>
<!-- search -->
<svg style="left:387px;top:214px" width="24" height="24"><circle cx="9.5" cy="9.5" r="8.3" fill="none" stroke="#6e6e6e" stroke-width="1.9"/><path d="M15.5 15.5 L22.5 22.5" stroke="#6e6e6e" stroke-width="2.2" stroke-linecap="round"/><circle cx="6" cy="9.3" r="0.9" fill="#6e6e6e"/><circle cx="9.5" cy="9.3" r="0.9" fill="#6e6e6e"/><circle cx="13" cy="9.3" r="0.9" fill="#6e6e6e"/></svg>
<!-- up/down -->
<svg style="left:515px;top:214px" width="22" height="22"><circle cx="11" cy="11" r="9.8" fill="none" stroke="#b8b8b8" stroke-width="1.6"/><path d="M11 17 V5.5 M6.5 10 L11 5.5 L15.5 10" fill="none" stroke="#b8b8b8" stroke-width="1.7"/></svg>
<svg style="left:559px;top:214px" width="22" height="22"><circle cx="11" cy="11" r="9.8" fill="none" stroke="#b8b8b8" stroke-width="1.6"/><path d="M11 5 V16.5 M6.5 12 L11 16.5 L15.5 12" fill="none" stroke="#b8b8b8" stroke-width="1.7"/></svg>
<div class="t" style="left:612px;top:218px;font-size:12px;line-height:13px;height:13px;color:#333">1</div>
<div class="a" style="left:602px;top:238px;width:28px;height:1px;background:#c4c4c4"></div>
<div class="t" style="left:635px;top:218px;font-size:12px;line-height:13px;height:13px;color:#333">/ &nbsp;1</div>
<div class="a" style="left:673px;top:211px;width:1px;height:28px;background:#d2d2d2"></div>
<!-- cursor -->
<svg style="left:701px;top:214px" width="13" height="21"><path d="M0.5 0.5 L12.5 11.5 L7.5 11.8 L10.5 19 L8.2 20.5 L5.2 13 L0.5 16.5Z" fill="#1e73d2" stroke="#1e73d2" stroke-width="0.8" stroke-linejoin="round"/></svg>
<!-- hand -->
<svg style="left:739px;top:213px" width="23" height="25"><path d="M5.5 14 V5 Q5.5 3.2 7.2 3.2 Q9 3.2 9 5 V11 M9 11 V2.8 Q9 1 10.8 1 Q12.6 1 12.6 2.8 V11 M12.6 11 V3.5 Q12.6 1.8 14.3 1.8 Q16 1.8 16 3.5 V11 M16 11 V5.5 Q16 4 17.6 4 Q19.3 4 19.3 5.5 V16 Q19.3 23.5 12 23.5 Q8 23.5 5.5 20 L1.5 14.5 Q0.8 13 2.2 12.3 Q3.5 11.8 5.5 14" fill="none" stroke="#6e6e6e" stroke-width="1.7" stroke-linejoin="round"/></svg>
<!-- zoom out/in -->
<svg style="left:783px;top:214px" width="22" height="22"><circle cx="11" cy="11" r="9.8" fill="none" stroke="#6e6e6e" stroke-width="1.8"/><path d="M6 11 H16" stroke="#6e6e6e" stroke-width="1.9"/></svg>
<svg style="left:827px;top:214px" width="22" height="22"><circle cx="11" cy="11" r="9.8" fill="none" stroke="#6e6e6e" stroke-width="1.8"/><path d="M6 11 H16 M11 6 V16" stroke="#6e6e6e" stroke-width="1.9"/></svg>
<div class="t" style="left:878px;top:218px;font-size:11.6px;line-height:13px;height:13px;color:#333">105%</div>
<svg style="left:923px;top:223px" width="8" height="5"><path d="M0 0 H8 L4 4.5Z" fill="#6e6e6e"/></svg>
<div class="a" style="left:870px;top:238px;width:68px;height:1px;background:#c4c4c4"></div>
<!-- fit page -->
<svg style="left:961px;top:213px" width="31" height="25"><path d="M1 0 V5 H16 V0" fill="none" stroke="#1e73d2" stroke-width="1.8"/><path d="M1 25 V10 H10 L16 15.5 V25" fill="none" stroke="#1e73d2" stroke-width="1.8"/><path d="M10 10 V15.5 H16" fill="none" stroke="#1e73d2" stroke-width="1.4"/><path d="M4 21.5 H13 M6 19.5 L4 21.5 L6 23.5 M11 19.5 L13 21.5 L11 23.5" fill="none" stroke="#1e73d2" stroke-width="1.2"/><path d="M23 10 H30 L26.5 14Z" fill="#1e73d2"/></svg>
<!-- scroll mode -->
<svg style="left:1015px;top:215px" width="23" height="22"><rect x="1" y="1" width="21" height="7" rx="1" fill="none" stroke="#6e6e6e" stroke-width="1.8"/><path d="M4.5 4.5 H6 M8.5 4.5 H10 M12.5 4.5 H14 M16.5 4.5 H18" stroke="#6e6e6e" stroke-width="1.8"/><path d="M11.5 10.5 V20.5 M7.5 16.5 L11.5 20.5 L15.5 16.5" fill="none" stroke="#6e6e6e" stroke-width="1.8"/></svg>
<div class="a" style="left:1058px;top:211px;width:1px;height:28px;background:#d2d2d2"></div>
<!-- comment -->
<svg style="left:1081px;top:215px" width="21" height="22"><path d="M2 1 H18.6 Q19.6 1 19.6 2 V13.6 Q19.6 14.6 18.6 14.6 H11 L6 20 V14.6 H2 Q1 14.6 1 13.6 V2 Q1 1 2 1Z" fill="#e0e0e0" stroke="#6e6e6e" stroke-width="1.9" stroke-linejoin="round"/><path d="M4 6.3 H15.5 M4 9.3 H15.5" stroke="#6e6e6e" stroke-width="1.2"/></svg>
<!-- highlighter -->
<svg style="left:1124px;top:214px" width="24" height="23"><rect x="5.8" y="17" width="16.2" height="5" fill="#dedede"/><line x1="8" y1="13.5" x2="19.5" y2="3.5" stroke="#6e6e6e" stroke-width="7" stroke-linecap="round"/><line x1="8.3" y1="13.2" x2="19.5" y2="3.5" stroke="#e0e0e0" stroke-width="3.4" stroke-linecap="round"/><path d="M3.5 15 L6.5 12 L10 15.8 L7 18.5Z" fill="#6e6e6e"/><path d="M0 20.5 L3 16.8 L5.8 19.5Z" fill="#6e6e6e"/></svg>
<!-- sign -->
<svg style="left:1167px;top:214px" width="25" height="22"><path d="M13.5 3 L17 0 L21.5 4.5 L18.5 8Z" fill="#dcdcdc"/><path d="M14 1.2 L20.8 8" stroke="#6e6e6e" stroke-width="1.8" stroke-linecap="round"/><path d="M12.5 4.5 L17.5 9.5 L14 16.5 L1.2 20.8 L5.5 8Z" fill="#fafafa" stroke="#6e6e6e" stroke-width="1.9" stroke-linejoin="round"/><circle cx="10" cy="12.3" r="1.6" fill="none" stroke="#6e6e6e" stroke-width="1.4"/><path d="M1.5 20.5 L8.8 13.5" stroke="#6e6e6e" stroke-width="1.3"/><path d="M15.5 21 L17.5 15.5 L19 21 M16.2 19 H18.5 M20 15.5 V21 Q22.5 21 22.5 19.3 Q22.5 17.8 20 17.8 M23 21 Q24.5 20 24.5 18.5" fill="none" stroke="#6e6e6e" stroke-width="1.2"/></svg>
<!-- Freigeben -->
<div class="a" style="left:1361px;top:209px;width:133px;height:32px;background:#2a80e4;border-radius:16px"></div>
<svg style="left:1378px;top:216px" width="17" height="17"><path d="M5.5 6.5 H1 V15.8 H16 V6.5 H11.5" fill="none" stroke="#fff" stroke-width="2.1"/><path d="M8.5 12 V1.8 M5 5.3 L8.5 1.8 L12 5.3" fill="none" stroke="#fff" stroke-width="2.1"/></svg>
<div class="t" style="left:1403px;top:216px;font-size:15.5px;line-height:17px;height:17px;font-weight:bold;color:#fff">Freigeben</div>
<!-- ===== DOCUMENT AREA ===== -->
<div class="a" style="left:197px;top:249px;width:18px;height:640px;background:#e8e8e8"></div>
<svg style="left:203px;top:563px" width="7" height="11"><path d="M0 0 L6.5 5.5 L0 11Z" fill="#6e6e6e"/></svg>
<div class="a" style="left:215px;top:249px;width:957px;height:640px;background:#fff"></div>
<div class="a" style="left:1172px;top:249px;width:1px;height:640px;background:#c8c8c8"></div>
<div class="a" style="left:1173px;top:249px;width:17px;height:640px;background:#efefef"></div>
<div class="a" style="left:1190px;top:249px;width:1px;height:640px;background:#c8c8c8"></div>
<svg style="left:1177px;top:255px" width="9" height="6"><path d="M0.8 5 L4.5 1.3 L8.2 5" fill="none" stroke="#555" stroke-width="1.8"/></svg>
<svg style="left:1177px;top:877px" width="9" height="6"><path d="M0.8 1 L4.5 4.7 L8.2 1" fill="none" stroke="#555" stroke-width="1.8"/></svg>
<div class="a" style="left:1174px;top:355px;width:15px;height:286px;background:#c8c8c8"></div>
<div class="a" style="left:1191px;top:249px;width:17px;height:640px;background:#e8e8e8"></div>
<div class="a" style="left:1208px;top:249px;width:1px;height:640px;background:#c8c8c8"></div>
<svg style="left:1196px;top:563px" width="7" height="11"><path d="M0 0 L6.5 5.5 L0 11Z" fill="#6e6e6e"/></svg>
<div style="position:absolute;white-space:nowrap;font-size:11.30px;line-height:11.30px;height:11.30px;color:#000;left:306.5px;top:305.7px;">Beispielunternehmen · Beispielstraße 1 · 12345 Musterort</div>
<div style="position:absolute;white-space:nowrap;font-size:14.35px;line-height:14.35px;height:14.35px;color:#000;left:306.5px;top:319.5px;">Firma Max Mustermann</div>
<div style="position:absolute;white-space:nowrap;font-size:14.35px;line-height:14.35px;height:14.35px;color:#000;left:306.5px;top:336.3px;">Musterstraße 3</div>
<div style="position:absolute;white-space:nowrap;font-size:14.35px;line-height:14.35px;height:14.35px;color:#000;left:306.5px;top:353.3px;">12345 Musterort</div>
<div class="a" style="left:768px;top:324px;width:315px;height:138px;border:1.3px solid #000"></div>
<div style="position:absolute;white-space:nowrap;font-size:14.35px;line-height:14.35px;height:14.35px;color:#000;left:771.5px;top:326.6px;">Kundennummer</div>
<div style="position:absolute;white-space:nowrap;font-size:14.35px;line-height:14.35px;height:14.35px;color:#000;left:885.7px;top:326.6px;">10000</div>
<div style="position:absolute;white-space:nowrap;font-size:14.35px;line-height:14.35px;height:14.35px;color:#000;left:771.5px;top:360.3px;">Ansprechpartner</div>
<div style="position:absolute;white-space:nowrap;font-size:14.35px;line-height:14.35px;height:14.35px;color:#000;left:885.7px;top:360.3px;">Manfred Müller</div>
<div style="position:absolute;white-space:nowrap;font-size:14.35px;line-height:14.35px;height:14.35px;color:#000;left:771.5px;top:376.3px;">EMail</div>
<div style="position:absolute;white-space:nowrap;font-size:14.35px;line-height:14.35px;height:14.35px;color:#000;left:885.7px;top:376.3px;">noreply@ingenious.de</div>
<div style="position:absolute;white-space:nowrap;font-size:14.35px;line-height:14.35px;height:14.35px;color:#000;left:771.5px;top:393.3px;">Telefon</div>
<div style="position:absolute;white-space:nowrap;font-size:14.35px;line-height:14.35px;height:14.35px;color:#000;left:885.7px;top:393.3px;">0341/123456</div>
<div style="position:absolute;white-space:nowrap;font-size:14.35px;line-height:14.35px;height:14.35px;color:#000;left:771.5px;top:409.9px;">Telefax</div>
<div style="position:absolute;white-space:nowrap;font-size:14.35px;line-height:14.35px;height:14.35px;color:#000;left:885.7px;top:409.9px;">0341/654321</div>
<div style="position:absolute;white-space:nowrap;font-size:14.35px;line-height:14.35px;height:14.35px;color:#000;left:771.5px;top:444.9px;">Datum</div>
<div style="position:absolute;white-space:nowrap;font-size:14.35px;line-height:14.35px;height:14.35px;color:#000;left:885.7px;top:444.9px;">14.10.2019</div>
<div style="position:absolute;white-space:nowrap;font-size:16.00px;line-height:16.00px;height:16.00px;color:#000;font-weight:bold;left:306.5px;top:460.9px;">Zahlungserinnerung</div>
<div style="position:absolute;white-space:nowrap;font-size:14.45px;line-height:14.45px;height:14.45px;color:#000;left:306.5px;top:531.8px;">Sehr geehrter Herr Mustermann</div>
<div style="position:absolute;white-space:nowrap;font-size:14.45px;line-height:14.45px;height:14.45px;color:#000;left:306.5px;top:583.0px;">sicherlich haben Sie übersehen, dass nachfolgend aufgeführte Positionen zur Zahlung fällig waren. Wir bitten Sie, diese</div>
<div style="position:absolute;white-space:nowrap;font-size:14.45px;line-height:14.45px;height:14.45px;color:#000;left:306.5px;top:598.6px;">Positionen bis zum 19.10.2019 auszugleichen.</div>
<div style="position:absolute;white-space:nowrap;font-size:12.70px;line-height:12.70px;height:12.70px;color:#000;font-weight:bold;left:314.5px;top:657.1px;">Rechnung</div>
<div style="position:absolute;white-space:nowrap;font-size:12.70px;line-height:12.70px;height:12.70px;color:#000;font-weight:bold;left:203.5px;top:653.9px;width:300px;text-align:right;">vom</div>
<div style="position:absolute;white-space:nowrap;font-size:12.70px;line-height:12.70px;height:12.70px;color:#000;font-weight:bold;left:510.5px;top:653.9px;">Kommission</div>
<div style="position:absolute;white-space:nowrap;font-size:12.70px;line-height:12.70px;height:12.70px;color:#000;font-weight:bold;left:459.0px;top:653.9px;width:300px;text-align:right;">Rg.-Betrag</div>
<div style="position:absolute;white-space:nowrap;font-size:12.70px;line-height:12.70px;height:12.70px;color:#000;font-weight:bold;left:539.5px;top:653.9px;width:300px;text-align:right;">Offen</div>
<div style="position:absolute;white-space:nowrap;font-size:12.70px;line-height:12.70px;height:12.70px;color:#000;font-weight:bold;left:744.0px;top:653.5px;width:300px;text-align:center;">Letzte</div>
<div style="position:absolute;white-space:nowrap;font-size:12.70px;line-height:12.70px;height:12.70px;color:#000;font-weight:bold;left:737.5px;top:668.6px;width:300px;text-align:center;">Mahnung</div>
<div style="position:absolute;white-space:nowrap;font-size:12.70px;line-height:12.70px;height:12.70px;color:#000;font-weight:bold;left:693.2px;top:653.5px;width:300px;text-align:right;">Mahn-</div>
<div style="position:absolute;white-space:nowrap;font-size:12.70px;line-height:12.70px;height:12.70px;color:#000;font-weight:bold;left:693.2px;top:668.6px;width:300px;text-align:right;">gebühr</div>
<div style="position:absolute;white-space:nowrap;font-size:12.70px;line-height:12.70px;height:12.70px;color:#000;font-weight:bold;left:760.2px;top:653.5px;width:300px;text-align:right;">Verzugs-</div>
<div style="position:absolute;white-space:nowrap;font-size:12.70px;line-height:12.70px;height:12.70px;color:#000;font-weight:bold;left:760.2px;top:668.6px;width:300px;text-align:right;">zinsen</div>
<div class="a" style="left:306px;top:682px;width:758px;height:1.3px;background:#000"></div>
<div class="a" style="left:306px;top:700px;width:758px;height:1.3px;background:#000"></div>
<div class="a" style="left:306px;top:719px;width:758px;height:1.3px;background:#000"></div>
<div class="a" style="left:306px;top:737px;width:758px;height:1.3px;background:#000"></div>
<div style="position:absolute;white-space:nowrap;font-size:12.70px;line-height:12.70px;height:12.70px;color:#000;left:314.5px;top:686.2px;">RG2019/0001</div>
<div style="position:absolute;white-space:nowrap;font-size:12.70px;line-height:12.70px;height:12.70px;color:#000;left:204.0px;top:683.3px;width:300px;text-align:right;">17.05.2019</div>
<div style="position:absolute;white-space:nowrap;font-size:12.70px;line-height:12.70px;height:12.70px;color:#000;left:459.0px;top:683.3px;width:300px;text-align:right;">872,00</div>
<div style="position:absolute;white-space:nowrap;font-size:12.70px;line-height:12.70px;height:12.70px;color:#000;left:539.5px;top:683.3px;width:300px;text-align:right;">872,00</div>
<div style="position:absolute;white-space:nowrap;font-size:12.70px;line-height:12.70px;height:12.70px;color:#000;left:693.2px;top:683.3px;width:300px;text-align:right;">0,00</div>
<div style="position:absolute;white-space:nowrap;font-size:12.70px;line-height:12.70px;height:12.70px;color:#000;left:760.2px;top:683.3px;width:300px;text-align:right;">0,00</div>
<div style="position:absolute;white-space:nowrap;font-size:12.70px;line-height:12.70px;height:12.70px;color:#000;left:314.5px;top:704.9px;">RG2019/0003</div>
<div style="position:absolute;white-space:nowrap;font-size:12.70px;line-height:12.70px;height:12.70px;color:#000;left:204.0px;top:702.3px;width:300px;text-align:right;">21.05.2019</div>
<div style="position:absolute;white-space:nowrap;font-size:12.70px;line-height:12.70px;height:12.70px;color:#000;left:510.5px;top:702.3px;">Demo</div>
<div style="position:absolute;white-space:nowrap;font-size:12.70px;line-height:12.70px;height:12.70px;color:#000;left:459.0px;top:702.3px;width:300px;text-align:right;">931,70</div>
<div style="position:absolute;white-space:nowrap;font-size:12.70px;line-height:12.70px;height:12.70px;color:#000;left:539.5px;top:702.3px;width:300px;text-align:right;">931,70</div>
<div style="position:absolute;white-space:nowrap;font-size:12.70px;line-height:12.70px;height:12.70px;color:#000;left:693.2px;top:702.3px;width:300px;text-align:right;">0,00</div>
<div style="position:absolute;white-space:nowrap;font-size:12.70px;line-height:12.70px;height:12.70px;color:#000;left:760.2px;top:702.3px;width:300px;text-align:right;">0,00</div>
<div style="position:absolute;white-space:nowrap;font-size:12.70px;line-height:12.70px;height:12.70px;color:#000;left:314.5px;top:723.1px;">RG2019/0004</div>
<div style="position:absolute;white-space:nowrap;font-size:12.70px;line-height:12.70px;height:12.70px;color:#000;left:204.0px;top:720.3px;width:300px;text-align:right;">21.05.2019</div>
<div style="position:absolute;white-space:nowrap;font-size:12.70px;line-height:12.70px;height:12.70px;color:#000;left:459.0px;top:720.3px;width:300px;text-align:right;">979,26</div>
<div style="position:absolute;white-space:nowrap;font-size:12.70px;line-height:12.70px;height:12.70px;color:#000;left:539.5px;top:720.3px;width:300px;text-align:right;">979,26</div>
<div style="position:absolute;white-space:nowrap;font-size:12.70px;line-height:12.70px;height:12.70px;color:#000;left:693.2px;top:720.3px;width:300px;text-align:right;">0,00</div>
<div style="position:absolute;white-space:nowrap;font-size:12.70px;line-height:12.70px;height:12.70px;color:#000;left:760.2px;top:720.3px;width:300px;text-align:right;">0,00</div>
<div style="position:absolute;white-space:nowrap;font-size:14.35px;line-height:14.35px;height:14.35px;color:#000;left:314.2px;top:741.2px;">Summe:</div>
<div style="position:absolute;white-space:nowrap;font-size:14.35px;line-height:14.35px;height:14.35px;color:#000;left:458.5px;top:740.6px;width:300px;text-align:right;">2.782,96</div>
<div style="position:absolute;white-space:nowrap;font-size:14.35px;line-height:14.35px;height:14.35px;color:#000;left:539.5px;top:740.6px;width:300px;text-align:right;">2.782,96</div>
<div style="position:absolute;white-space:nowrap;font-size:14.35px;line-height:14.35px;height:14.35px;color:#000;left:309.4px;top:758.3px;">Mahngebühren gesamt:</div>
<div style="position:absolute;white-space:nowrap;font-size:14.35px;line-height:14.35px;height:14.35px;color:#000;left:539.5px;top:756.5px;width:300px;text-align:right;">0,00</div>
<div style="position:absolute;white-space:nowrap;font-size:14.35px;line-height:14.35px;height:14.35px;color:#000;left:309.4px;top:775.2px;">Verzugszinsen gesamt:</div>
<div style="position:absolute;white-space:nowrap;font-size:14.35px;line-height:14.35px;height:14.35px;color:#000;left:539.5px;top:773.4px;width:300px;text-align:right;">0,00</div>
<div style="position:absolute;white-space:nowrap;font-size:14.35px;line-height:14.35px;height:14.35px;color:#000;font-weight:bold;left:309.4px;top:809.1px;">Bitte zahlen Sie insgesamt:</div>
<div style="position:absolute;white-space:nowrap;font-size:14.35px;line-height:14.35px;height:14.35px;color:#000;font-weight:bold;left:539.5px;top:807.1px;width:300px;text-align:right;">2.782,96</div>
<div class="a" style="left:306px;top:822.6px;width:758px;height:1.4px;background:#000"></div>
<div class="a" style="left:762px;top:823.6px;width:80px;height:1.3px;background:#000"></div>
<div style="position:absolute;white-space:nowrap;font-size:14.45px;line-height:14.45px;height:14.45px;color:#000;left:306.5px;top:843.7px;">Zahlungseingänge wurden berücksichtigt bis einschließlich 13.10.2019.</div>
<!-- ===== RIGHT PANE ===== -->
<div class="a" style="left:1209px;top:249px;width:300px;height:640px;background:#fafafa;"></div>
<div class="a" style="left:1224px;top:264px;width:270px;height:35px;background:#fff;border:1px solid #c9c9c9"></div>
<div style="position:absolute;white-space:nowrap;font-size:13.30px;line-height:13.30px;height:13.30px;color:#8e8e8e;left:1238.0px;top:275.7px;">Suchen 'Kopfzeile'</div>
<div class="a" style="left:1224px;top:314px;width:253px;height:83px;background:#f6f6f6;"></div>
<div class="a" style="left:1224px;top:355px;width:253px;height:1px;background:#fafafa;"></div>
<div class="a" style="left:1493px;top:316px;width:15px;height:477px;background:#efefef;"></div>
<div class="a" style="left:1494px;top:331px;width:13px;height:379px;background:#c8c8c8;"></div>
<svg style="left:1496px;top:320px" width="9" height="6"><path d="M0.8 5 L4.5 1.3 L8.2 5" fill="none" stroke="#555" stroke-width="1.8"/></svg>
<svg style="left:1496px;top:781px" width="9" height="6"><path d="M0.8 1 L4.5 4.7 L8.2 1" fill="none" stroke="#555" stroke-width="1.8"/></svg>
<svg style="left:1236px;top:323px" width="25" height="25"><path d="M1.5 1 H11.5 L16.5 6 V18.5 H1.5Z" fill="#d3ecec" stroke="#1b9a9c" stroke-width="1.8" stroke-linejoin="round"/><path d="M6.5 5 Q5.8 5.5 6.5 8 Q7.3 10.5 10.3 11.5 M6.5 8.5 Q5.5 11 3.5 13" fill="none" stroke="#1b9a9c" stroke-width="1"/><circle cx="16.5" cy="16.5" r="6" fill="#1b9a9c"/><path d="M13 16.5 H19.5 M17 14 L19.5 16.5 L17 19" fill="none" stroke="#fff" stroke-width="1.8"/></svg>
<div style="position:absolute;white-space:nowrap;font-size:15.50px;line-height:15.50px;height:15.50px;color:#4b4b4b;left:1268.0px;top:326.5px;">PDF-Datei exportieren</div>
<svg style="left:1456px;top:330px" width="13" height="9"><path d="M1.2 1.5 L6.5 6.8 L11.8 1.5" fill="none" stroke="#444" stroke-width="2"/></svg>
<svg style="left:1236px;top:367px" width="25" height="25"><path d="M1.5 1 H11.5 L16.5 6 V18.5 H1.5Z" fill="#fbe3e4" stroke="#e0434b" stroke-width="1.8" stroke-linejoin="round"/><path d="M6.5 5 Q5.8 5.5 6.5 8 Q7.3 10.5 10.3 11.5 M6.5 8.5 Q5.5 11 3.5 13" fill="none" stroke="#e0434b" stroke-width="1"/><circle cx="16.5" cy="16.5" r="6" fill="#e0434b"/><path d="M13 16.5 H20 M16.5 13 V20" fill="none" stroke="#fff" stroke-width="1.9"/></svg>
<div style="position:absolute;white-space:nowrap;font-size:15.50px;line-height:15.50px;height:15.50px;color:#4b4b4b;left:1268.0px;top:370.5px;">PDF-Datei erstellen</div>
<svg style="left:1456px;top:374px" width="13" height="9"><path d="M1.2 1.5 L6.5 6.8 L11.8 1.5" fill="none" stroke="#444" stroke-width="2"/></svg>
<svg style="left:1235px;top:412px" width="25" height="25"><rect x="1" y="1" width="20" height="8" fill="#f6d5ea" stroke="#d6359b" stroke-width="1.8"/><rect x="1" y="12.5" width="9" height="8" fill="#f6d5ea" stroke="#d6359b" stroke-width="1.8"/><path d="M13 14 H21 M13 17 H21 M13 20 H21" stroke="#d6359b" stroke-width="1.3"/></svg>
<div style="position:absolute;white-space:nowrap;font-size:15.50px;line-height:15.50px;height:15.50px;color:#4b4b4b;left:1268.0px;top:415.5px;">PDF bearbeiten</div>
<svg style="left:1236px;top:459px" width="25" height="25"><path d="M1 1.5 Q1 0.5 2 0.5 H19 Q20 0.5 20 1.5 V15 Q20 16 19 16 H9 L5.5 20.5 V16 H2 Q1 16 1 15Z" fill="#dcb828"/><path d="M5 5.5 H16 M5 9.5 H13" stroke="#fff" stroke-width="1.8"/></svg>
<div style="position:absolute;white-space:nowrap;font-size:15.50px;line-height:15.50px;height:15.50px;color:#4b4b4b;left:1268.0px;top:461.5px;">Kommentieren</div>
<svg style="left:1234px;top:503px" width="25" height="25"><path d="M0.8 0.8 H10 L12.5 3.3 V16 H0.8Z" fill="#fff" stroke="#6c63e8" stroke-width="1.7"/><path d="M5 4 Q4.5 4.5 5 7 Q5.7 9 8 10 M5 7.5 Q4 9.5 2.5 11" fill="none" stroke="#6c63e8" stroke-width="0.9"/><path d="M12 0 H20 L24 4 V16 H12Z" fill="#6c63e8"/><path d="M20 0 V4 H24" fill="#fff"/><path d="M9 13 V19 H4 L11.5 24.5 L19 19 H14 V13Z" fill="#6c63e8"/></svg>
<div style="position:absolute;white-space:nowrap;font-size:15.50px;line-height:15.50px;height:15.50px;color:#4b4b4b;left:1268.0px;top:507.9px;">Dateien zusammenführen</div>
<svg style="left:1236px;top:551px" width="25" height="25"><path d="M1 6.5 V19.5 H9.5 M9.5 6.5 H6 M1 6.5 H3" fill="none" stroke="#7ac943" stroke-width="1.8" stroke-dasharray="2.2 1.6"/><rect x="12" y="1" width="8.5" height="18.5" fill="#e2f3d6" stroke="#7ac943" stroke-width="1.8"/><path d="M2 0 H8 V5Z M3 2 L8.5 7" fill="#7ac943" stroke="#7ac943" stroke-width="1.6"/></svg>
<div style="position:absolute;white-space:nowrap;font-size:15.50px;line-height:15.50px;height:15.50px;color:#4b4b4b;left:1268.0px;top:553.9px;">Seiten organisieren</div>
<svg style="left:1235px;top:597px" width="25" height="25"><path d="M16.5 1.5 Q18 0.3 19.5 1.7 Q21 3.2 19.5 4.6 L9 14.5 L5.8 11.2Z" fill="#f6d5ea" stroke="#d6359b" stroke-width="1.8" stroke-linejoin="round"/><path d="M5.8 11.2 L1 18.5 H7 L9 14.5" fill="#d6359b"/><rect x="9.5" y="14.8" width="12.5" height="4" fill="#d6359b"/></svg>
<div style="position:absolute;white-space:nowrap;font-size:15.50px;line-height:15.50px;height:15.50px;color:#4b4b4b;left:1268.0px;top:599.7px;">Schwärzen</div>
<svg style="left:1237px;top:642px" width="25" height="25"><path d="M9 1 Q5 3 1.5 3 V11 Q1.5 18.5 9 22.5 Q16.5 18.5 16.5 11 V3 Q13 3 9 1Z" fill="#fff" stroke="#6c70e6" stroke-width="1.8" stroke-linejoin="round"/><path d="M9 2.2 Q5.6 4 2.6 4 V11 Q2.6 17.6 9 21.3Z" fill="#d8d9fa"/></svg>
<div style="position:absolute;white-space:nowrap;font-size:15.50px;line-height:15.50px;height:15.50px;color:#4b4b4b;left:1268.0px;top:645.6px;">Schützen</div>
<svg style="left:1237px;top:687px" width="25" height="25"><path d="M1.2 1 H12.5 L16.8 5.3 V18.2 H1.2Z" fill="#fbe3e4" stroke="#e0434b" stroke-width="1.8" stroke-linejoin="round"/><path d="M8.5 5 Q7.8 5.5 8.5 8 Q9.3 10.5 12.3 11.5 M8.5 8.5 Q7.5 11 5 13 M5.5 11.5 Q9 10 12.5 11.3" fill="none" stroke="#e0434b" stroke-width="1"/><path d="M1 22.5 H7 M10.5 22.5 H16.5" stroke="#e0434b" stroke-width="1.1"/><circle cx="8.8" cy="22.5" r="1.1" fill="none" stroke="#e0434b" stroke-width="0.9"/></svg>
<div style="position:absolute;white-space:nowrap;font-size:15.50px;line-height:15.50px;height:15.50px;color:#4b4b4b;left:1268.0px;top:691.8px;">PDF optimieren</div>
<svg style="left:1234px;top:733px" width="25" height="25"><g transform="rotate(45 11 11.5)"><path d="M8 0 Q8 -2.5 11 -2.5 Q14 -2.5 14 0 V18.5 L11 25 L8 18.5 Z" fill="#e6d8f8" stroke="#9b5de5" stroke-width="1.8" stroke-linejoin="round"/><path d="M8 18.5 L11 25 L14 18.5Z" fill="#fafafa" stroke="#9b5de5" stroke-width="1.6" stroke-linejoin="round"/></g><path d="M0.5 22.3 H10" stroke="#9b5de5" stroke-width="1.8"/><path d="M9.5 22 Q12 16.5 13.5 20 Q14.5 22.5 16 17.5 Q17 22.5 19 18.5 Q20 22.5 23.5 19" fill="none" stroke="#9b5de5" stroke-width="1.8"/></svg>
<div style="position:absolute;white-space:nowrap;font-size:15.50px;line-height:15.50px;height:15.50px;color:#4b4b4b;left:1268.0px;top:737.7px;">Ausfüllen und unterschreib...</div>
<div class="a" style="left:1224px;top:770px;width:269px;height:23px;overflow:hidden">
<svg style="left:11px;top:9px" width="25" height="25"><path d="M1.2 1 H10 L16 7 V22 H1.2Z" fill="#f8f0c4" stroke="#e2c21c" stroke-width="1.8" stroke-linejoin="round"/><path d="M10 1.5 V7 H15.5Z" fill="#fff" stroke="#e2c21c" stroke-width="1.6" stroke-linejoin="round"/><rect x="11" y="12.5" width="11" height="5" fill="#e2c21c"/></svg>
<div style="position:absolute;left:44px;top:12.5px;white-space:nowrap;font-size:15.5px;line-height:15.5px;color:#4b4b4b">Zur Überprüfung senden</div>
</div>
<div class="a" style="left:1224px;top:793px;width:269px;height:1px;background:#d0d0d0;"></div>
<div style="position:absolute;white-space:nowrap;font-size:12.80px;line-height:12.80px;height:12.80px;color:#333;font-weight:bold;left:1208.5px;top:814.7px;width:300px;text-align:center;">PDFs mit Acrobat Pro DC</div>
<div style="position:absolute;white-space:nowrap;font-size:12.80px;line-height:12.80px;height:12.80px;color:#333;font-weight:bold;left:1208.5px;top:830.2px;width:300px;text-align:center;">konvertieren und bearbeiten</div>
<div style="position:absolute;white-space:nowrap;font-size:11.20px;line-height:11.20px;height:11.20px;color:#1a5fb4;left:1208.5px;top:856.0px;width:300px;text-align:center;">Test starten</div>
</body></html>
